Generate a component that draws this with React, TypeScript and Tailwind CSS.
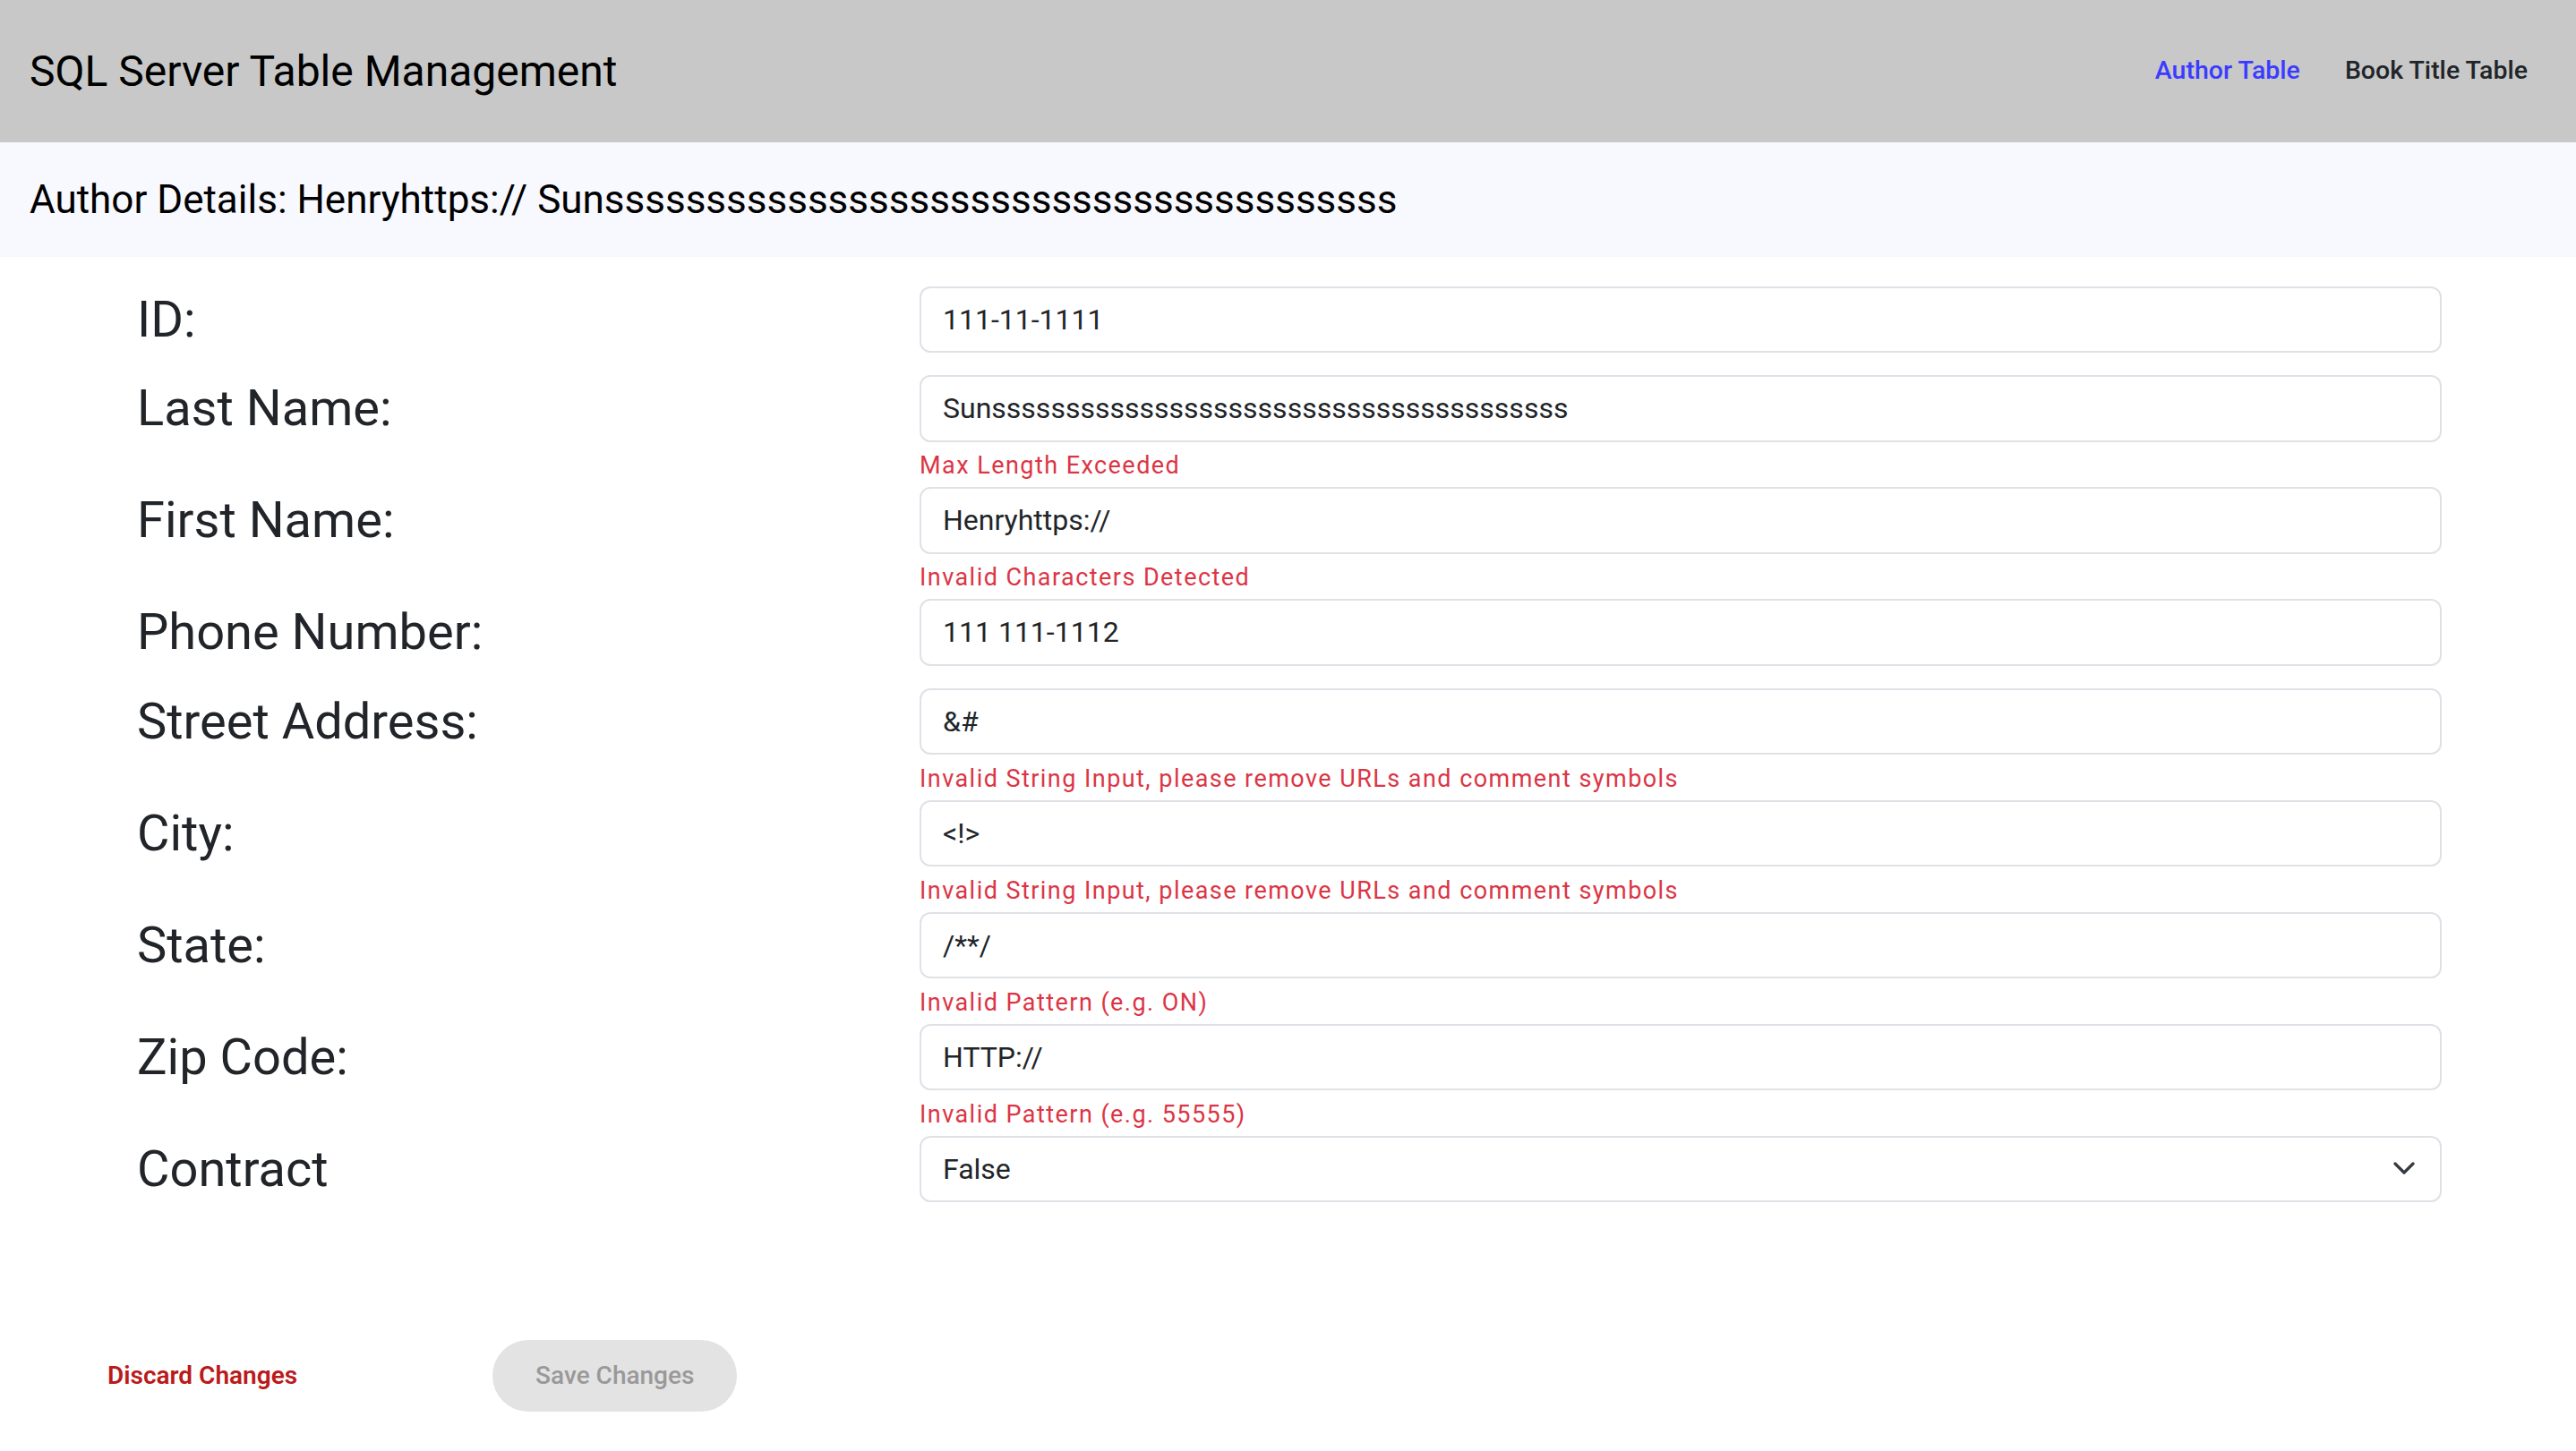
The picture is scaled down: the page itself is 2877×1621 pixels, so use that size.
import React from "react";

const LAST = "Sun" + "s".repeat(39);

type Field = { label: string; value: string; error?: string; select?: boolean };

const fields: Field[] = [
  { label: "ID:", value: "111-11-1111" },
  { label: "Last Name:", value: LAST, error: "Max Length Exceeded" },
  { label: "First Name:", value: "Henryhttps://", error: "Invalid Characters Detected" },
  { label: "Phone Number:", value: "111 111-1112" },
  { label: "Street Address:", value: "&#", error: "Invalid String Input, please remove URLs and comment symbols" },
  { label: "City:", value: "<!>", error: "Invalid String Input, please remove URLs and comment symbols" },
  { label: "State:", value: "/**/", error: "Invalid Pattern (e.g. ON)" },
  { label: "Zip Code:", value: "HTTP://", error: "Invalid Pattern (e.g. 55555)" },
  { label: "Contract", value: "False", select: true },
];

function Row({ f, last }: { f: Field; last: boolean }) {
  return (
    <div className={"flex items-start " + (f.error || last ? "" : "mb-[25px]")}>
      <div className="w-[1027px] pl-[153px] h-[74.5px] flex items-center">
        <span className="text-[56px] leading-none text-[#212529]">{f.label}</span>
      </div>
      <div className="w-[1700px]">
        <div className="h-[74.5px] border-2 border-[#dee2e6] rounded-[12px] bg-white flex items-center justify-between pl-[24px] pr-[28px]">
          <span className="text-[32px] text-[#212529] whitespace-nowrap">{f.value}</span>
          {f.select && (
            <svg width="24" height="15" viewBox="0 0 24 15" fill="none">
              <path d="M2 2 L12 12 L22 2" stroke="#343a40" strokeWidth="3.2" strokeLinecap="round" strokeLinejoin="round" />
            </svg>
          )}
        </div>
        {f.error && (
          <div className="mt-[7.5px] mb-[4px] text-[27px] tracking-[1.45px] leading-[39px] text-[#dc3545] whitespace-nowrap">
            {f.error}
          </div>
        )}
      </div>
    </div>
  );
}

export default function App() {
  return (
    <div className="min-h-screen bg-white font-['Roboto',sans-serif] text-[#212529]">
      <header className="h-[159px] bg-[#c8c8c8] flex items-center justify-between pl-[33px] pr-[54px]">
        <h1 className="text-[48px] leading-none font-normal text-black">SQL Server Table Management</h1>
        <nav className="flex items-center gap-[50px] text-[28.5px] font-medium">
          <a className="text-[#3b3bff]">Author Table</a>
          <a className="text-[#212529]">Book Title Table</a>
        </nav>
      </header>
      <div className="h-[128px] bg-[#f8f8ff] flex items-center pl-[33px]">
        <h2 className="text-[44px] leading-none font-normal text-black">
          Author Details: Henryhttps:// {LAST}
        </h2>
      </div>
      <form className="pt-[32.5px]">
        {fields.map((f, i) => (
          <Row key={f.label} f={f} last={i === fields.length - 1} />
        ))}
        <div className="flex items-center pl-[72px] mt-[153.5px]">
          <button type="button" className="h-[80px] px-[48px] text-[28px] font-semibold text-[#bb1a1a]">
            Discard Changes
          </button>
          <button type="button" className="ml-[170px] h-[80px] px-[48px] rounded-full bg-[#e3e3e3] text-[28px] font-medium text-[#999999]">
            Save Changes
          </button>
        </div>
      </form>
    </div>
  );
}
